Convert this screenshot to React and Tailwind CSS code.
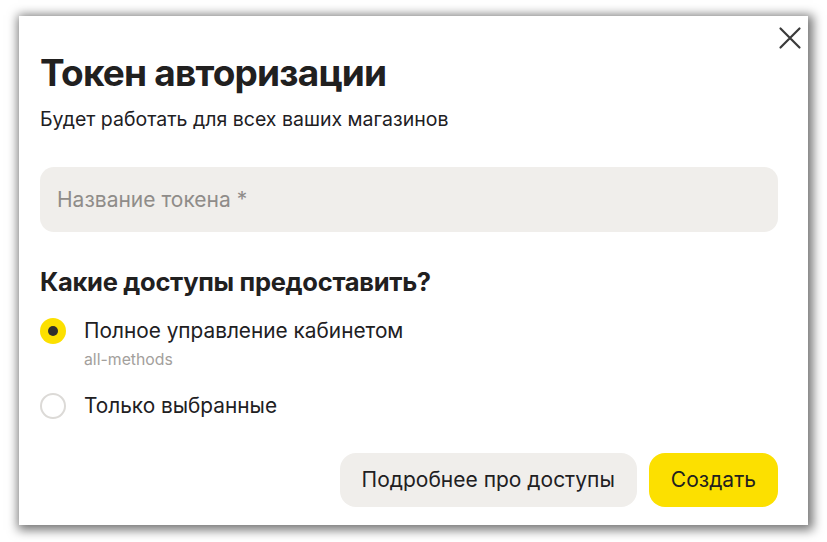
import React, { useState } from 'react';

const App = () => {
  const [access, setAccess] = useState('all');

  return (
    <div className="w-[827px] h-[542px] bg-white pt-[16px] pl-[19px]" style={{ fontFamily: 'Inter, "Noto Sans", sans-serif' }}>
      <div className="relative w-[789px] h-[509px] bg-white shadow-[2px_2px_10px_3px_rgba(0,0,0,0.55)] px-[21px] pt-[35px] text-[#21201f]">

        {/* Close */}
        <button className="absolute top-[10px] right-[6px] w-[24px] h-[24px] flex items-center justify-center text-[#3a3a3a]">
          <svg width="24" height="24" viewBox="0 0 24 24" fill="none" stroke="currentColor" strokeWidth="2.2" strokeLinecap="round">
            <path d="M2.5 2.5L21.5 21.5M21.5 2.5L2.5 21.5" />
          </svg>
        </button>

        <h1 className="text-[37px] font-bold leading-[44px] tracking-[-0.8px]">Токен авторизации</h1>
        <p className="mt-[11px] text-[19.5px] leading-[26px]">Будет работать для всех ваших магазинов</p>

        <div className="mt-[35px] h-[65px] w-[738px] rounded-[14px] bg-[#f0eeeb] flex items-center px-[17px]">
          <span className="text-[21px] text-[#8f8c89]">Название токена *</span>
        </div>

        <h2 className="mt-[34px] text-[25.5px] font-bold leading-[32px] tracking-[-0.3px]">Какие доступы предоставить?</h2>

        <div className="mt-[19px] flex flex-col">
          <label className="flex items-start gap-[18px] cursor-pointer" onClick={() => setAccess('all')}>
            <span className={`mt-[1px] w-[26px] h-[26px] rounded-full flex items-center justify-center shrink-0 ${access === 'all' ? 'bg-[#fce000]' : 'border-2 border-[#dcdad7]'}`}>
              {access === 'all' && <span className="w-[10px] h-[10px] rounded-full bg-[#302f2d]" />}
            </span>
            <span className="flex flex-col">
              <span className="text-[20.8px] leading-[28px]">Полное управление кабинетом</span>
              <span className="text-[15.8px] leading-[18px] text-[#a3a09c] mt-[6px]">all-methods</span>
            </span>
          </label>
          <label className="mt-[23px] flex items-start gap-[18px] cursor-pointer" onClick={() => setAccess('selected')}>
            <span className={`mt-[1px] w-[26px] h-[26px] rounded-full flex items-center justify-center shrink-0 ${access === 'selected' ? 'bg-[#fce000]' : 'border-2 border-[#dcdad7]'}`}>
              {access === 'selected' && <span className="w-[10px] h-[10px] rounded-full bg-[#302f2d]" />}
            </span>
            <span className="text-[20.8px] leading-[28px]">Только выбранные</span>
          </label>
        </div>

        <div className="absolute right-[30px] bottom-[18px] flex gap-[12px]">
          <button className="h-[54px] px-[22px] rounded-[16px] bg-[#f0eeeb] text-[21px]">Подробнее про доступы</button>
          <button className="h-[54px] px-[22px] rounded-[16px] bg-[#fce000] text-[21px]">Создать</button>
        </div>
      </div>
    </div>
  );
};

export default App;
